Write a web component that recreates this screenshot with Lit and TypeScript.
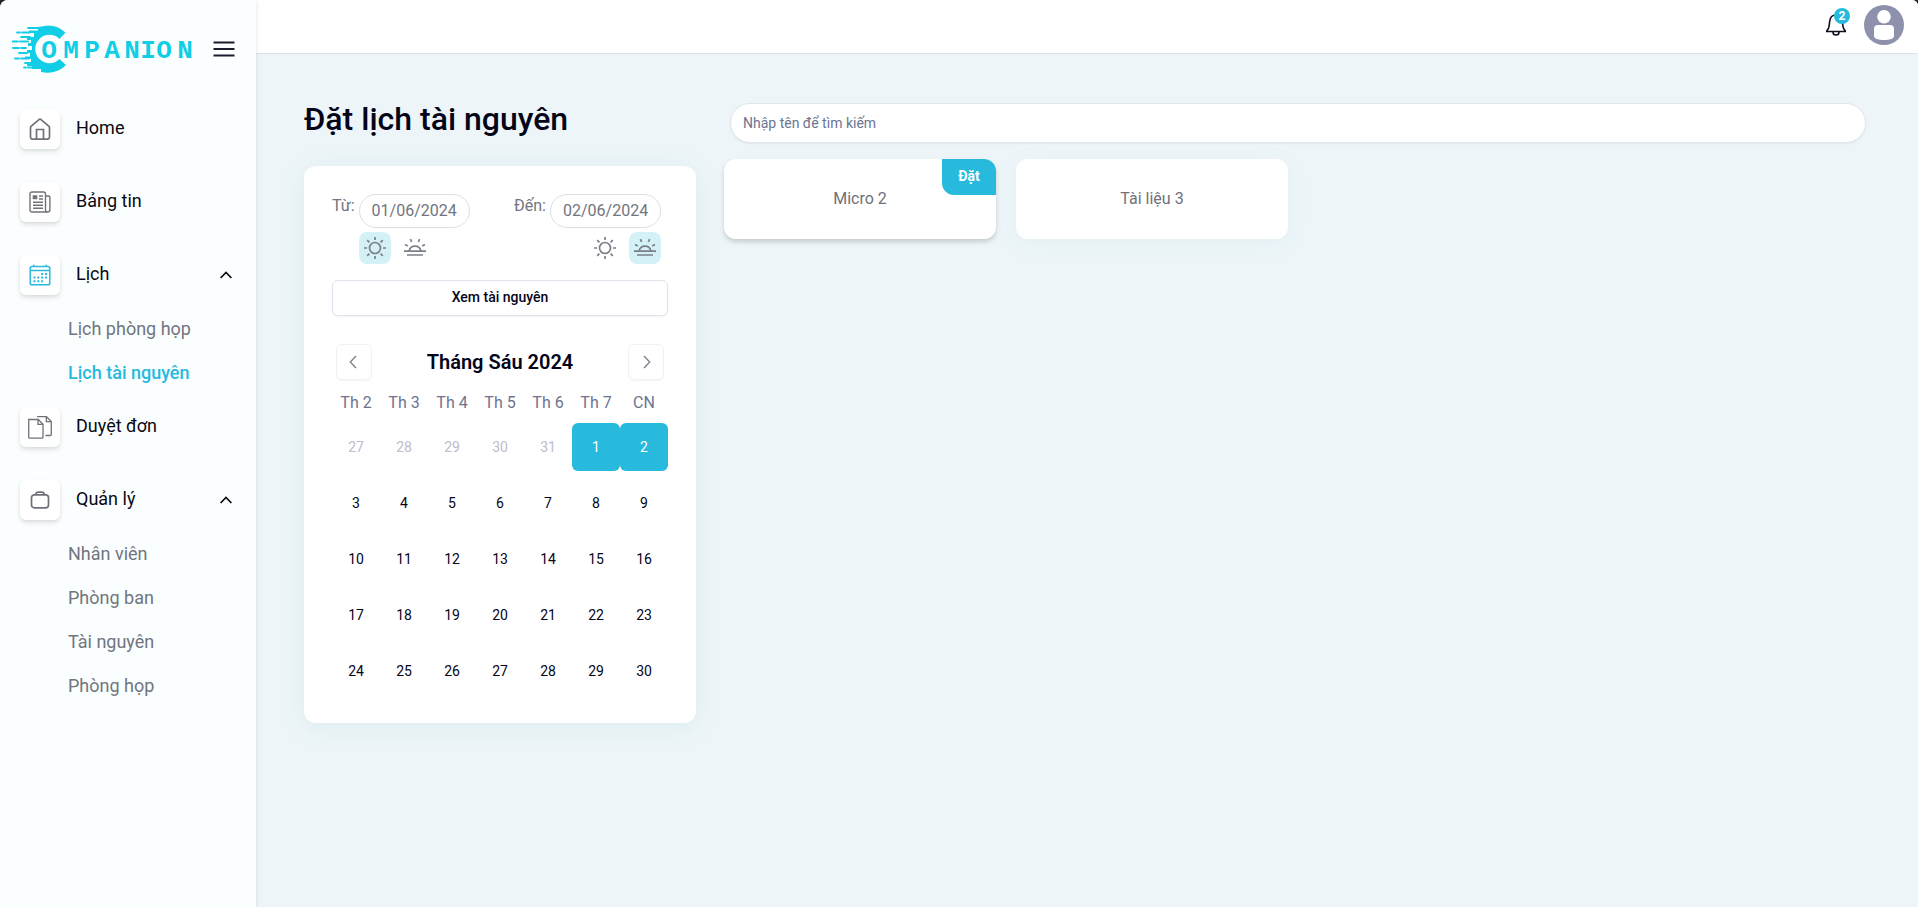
import { LitElement, html, css, svg } from "lit";
import { customElement, property, state } from "lit/decorators.js";
import { classMap } from "lit/directives/class-map.js";

const icons = {
  home: svg`<path d="M2 8.300 10.300 1.300c.4-.3 1-.3 1.400 0L20 8.300c.3.300.5.700.5 1.100V19a2.200 2.200 0 0 1-2.200 2.200H3.700A2.200 2.200 0 0 1 1.500 19V9.400c0-.4.2-.8.5-1.100Z"/><path d="M7.500 21v-9.500h7V21"/>`,
  news: svg`<path d="M18.500 21H3a2 2 0 0 1-2-2V3a2 2 0 0 1 2-2h11.500a2 2 0 0 1 2 2v15.800a2.200 2.200 0 0 0 4.400 0V6.500a1.500 1.500 0 0 0-1.500-1.500h-2.700" stroke-width="1.400"/><path d="M3.700 4.300h4.600v4H3.700z" fill="currentColor" stroke="none"/><path d="M10 5h4M10 8h4M4 11.200h10M4 14.200h10M4 17.200h10" stroke-width="1.400"/>`,
  calendar: svg`<path d="M3 2.500h16a1.800 1.800 0 0 1 1.800 1.800V19A1.800 1.800 0 0 1 19 20.800H3A1.800 1.800 0 0 1 1.200 19V4.300A1.800 1.800 0 0 1 3 2.500ZM1.200 6.500h19.600M4.800.8v1.700M17.200.8v1.700" stroke-width="1.500"/><path d="M12.200 10h2M16 10h2M4.500 13.500h2M8.300 13.500h2M12.200 13.500h2M16 13.500h2M4.500 17.200h2M8.300 17.200h2M12.200 17.200h2" stroke-width="2"/>`,
  docs: svg`<path d="M.7 3.500h9.600L15 8.200v13a1 1 0 0 1-1 1H1.700a1 1 0 0 1-1-1ZM10 3.500v4.900h5M9 .7h9.500l4.800 4.800v13a1 1 0 0 1-1 1H17.500M18.300.7v5h5" stroke-width="1.300"/>`,
  bag: svg`<rect x="2.500" y="5.800" width="17" height="13" rx="2.800"/><path d="M6.500 6c.4-1.800 1-2.800 2.600-2.800h3.800c1.600 0 2.200 1 2.600 2.800"/>`,
};

const sun = svg`<circle cx="11" cy="11" r="5.500"/><path d="M11 0v3M11 19v3M0 11h3M19 11h3M3.200 3.200l2.200 2.200M16.600 16.600l2.200 2.200M3.200 18.800l2.200-2.200M16.600 5.400l2.200-2.200"/>`;
const sunset = svg`<path d="M0 14.200h22M3 18h16M5.200 14a5.900 5.900 0 0 1 11.600 0M6.400 2.200l1.200 2.600M15.600 2.200l-1.200 2.600M1 7.600l2.800 1.400M21 7.600l-2.800 1.400"/>`;

type IconName = keyof typeof icons;
interface NavItem { label: string; icon: IconName; active?: boolean; children?: { label: string; active?: boolean }[]; }

const NAV: NavItem[] = [
  { label: "Home", icon: "home" },
  { label: "Bảng tin", icon: "news" },
  { label: "Lịch", icon: "calendar", active: true, children: [{ label: "Lịch phòng họp" }, { label: "Lịch tài nguyên", active: true }] },
  { label: "Duyệt đơn", icon: "docs" },
  { label: "Quản lý", icon: "bag", children: [{ label: "Nhân viên" }, { label: "Phòng ban" }, { label: "Tài nguyên" }, { label: "Phòng họp" }] },
];

const reset = css`
  :host { box-sizing: border-box; font-family: Roboto, "Noto Sans", sans-serif; }
  *, *::before, *::after { box-sizing: border-box; }
  button, input { font: inherit; color: inherit; margin: 0; }
  button { padding: 0; border: 0; background: none; cursor: pointer; }
  ul { list-style: none; margin: 0; padding: 0; }
  a { color: inherit; text-decoration: none; }
  svg { display: block; fill: none; }
`;

@customElement("brand-logo")
class BrandLogo extends LitElement {
  static styles = css`
    :host { display: block; }
    svg { display: block; }
    .word { font: 700 26px "Liberation Mono", monospace; text-anchor: middle; }
  `;
  render() {
    return html`<svg width="182" height="48" viewBox="0 0 182 48" fill="#12cde6" role="img" aria-label="Companion">
      <path d="M36 .5A26 26 0 0 1 53.500 7.500L47.500 14A14.200 14.200 0 1 0 47.500 34L54 40A26 26 0 0 1 29 47V44H20V41H15V38H19V34H13V31.500H18V28H15V25H20V21H16V18H19V15H15V12H22V8H17V5.500H26V2Z"/>
      <path d="M16 3h10M5 7.500h3M10 7.500h8M9 12h9M0 16.500h6M8 16.500h8M1 23h6M9 23h5M7 28h8M3 33.500h4M9 33.500h8M13 38h6M12 42.500h2M16 42.500h8" stroke="#12cde6" stroke-width="1.800" stroke-linecap="round"/>
      <text class="word" y="33" x="37 59 80 100 120 136 152 173">OMPANION</text>
    </svg>`;
  }
}

@customElement("side-nav")
class SideNav extends LitElement {
  static styles = [reset, css`
    :host { display: block; background: #fafeff; box-shadow: 0 1px 4px rgba(15, 60, 80, .14); padding: 25px 20px 24px 12px; position: relative; }
    .top { display: flex; align-items: center; justify-content: space-between; margin-bottom: 36px; }
    .menu { width: 24px; height: 24px; color: #1c1c2e; }
    .list { display: flex; flex-direction: column; gap: 12px; padding-left: 8px; }
    .entry { min-height: 61px; }
    .row { display: flex; align-items: center; width: 100%; height: 40px; text-align: left; font-size: 18px; line-height: 24px; color: #0a0a12; }
    .tile { display: grid; place-items: center; width: 40px; height: 40px; margin-right: 16px; border-radius: 6px; background: #fff; color: #71717a; box-shadow: 0 3px 5px rgba(0, 0, 0, .1), 0 1px 3px rgba(0, 0, 0, .05); }
    .tile.active { color: #27badc; }
    .label { flex: 1; padding-bottom: 2px; }
    .chevron { margin-right: 4px; }
    .sub { margin-top: 12px; padding-left: 48px; }
    .link { display: block; font-size: 18px; line-height: 44px; color: #71757e; }
    .link.active { color: #27badc; font-weight: 500; }
  `];
  render() {
    const content = (n: NavItem) => html`
      <span class=${classMap({ tile: true, active: !!n.active })}>
        <svg width=${n.icon === "docs" ? 24 : 22} height=${n.icon === "docs" ? 23 : 22} viewBox=${n.icon === "docs" ? "0 0 24 23" : "0 0 22 22"} stroke="currentColor" stroke-width="1.700" aria-hidden="true">${icons[n.icon]}</svg>
      </span><span class="label">${n.label}</span>`;
    return html`
      <div class="top">
        <brand-logo></brand-logo>
        <button class="menu" aria-label="Menu"><svg width="24" height="24" viewBox="0 0 24 24" stroke="currentColor" stroke-width="1.800"><path d="M1.500 5.500h21M1.500 12h21M1.500 18.500h21"/></svg></button>
      </div>
      <nav><ul class="list">
        ${NAV.map((n) => html`<li class="entry">
          ${n.children
            ? html`<button class="row" aria-expanded="true">${content(n)}
                <svg class="chevron" width="12" height="8" viewBox="0 0 12 8" stroke="currentColor" stroke-width="1.700" aria-hidden="true"><path d="M.6 7 6 1.500 11.400 7"/></svg></button>
              <ul class="sub">${n.children.map((c) => html`<li><a class=${classMap({ link: true, active: !!c.active })} href="#">${c.label}</a></li>`)}</ul>`
            : html`<a class="row" href="#">${content(n)}</a>`}
        </li>`)}
      </ul></nav>`;
  }
}

@customElement("top-bar")
class TopBar extends LitElement {
  static styles = [reset, css`
    :host { display: flex; align-items: center; justify-content: flex-end; gap: 16px; height: 53px; padding: 0 14px 4px; background: #fff; box-shadow: 0 1px 1px #dde4ea; }
    .bell { position: relative; width: 24px; height: 24px; color: #0e0e1c; }
    .count { position: absolute; top: -5px; right: -2px; width: 16px; height: 16px; border-radius: 50%; background: #27badc; color: #fff; font-size: 12px; font-weight: 700; line-height: 16px; text-align: center; }
  `];
  render() {
    return html`
      <button class="bell" aria-label="Thông báo">
        <svg width="24" height="24" viewBox="0 0 24 24" stroke="currentColor" stroke-width="1.600"><path d="M2.800 18.500h18.400v-.7c-1.300-1-2-2.500-2.300-4.600l-.6-5C17.900 4.600 15.500 2 12 2S6.100 4.600 5.700 8.200l-.6 5c-.3 2.100-1 3.600-2.300 4.600ZM9 18.800v.5c0 1.600 1.200 2.700 3 2.700s3-1.100 3-2.700v-.5"/></svg>
        <span class="count">2</span>
      </button>
      <button aria-label="Tài khoản">
        <svg width="40" height="40" viewBox="0 0 40 40"><circle cx="20" cy="20" r="20" fill="#8d91ac"/><circle cx="20" cy="11.700" r="6.800" fill="#fff"/><path d="M14 20h12a4 4 0 0 1 4 4v7c0 2.600-4.500 4-10 4s-10-1.400-10-4v-7a4 4 0 0 1 4-4Z" fill="#fff"/></svg>
      </button>`;
  }
}

@customElement("date-field")
class DateField extends LitElement {
  @property() label = "";
  @property() value = "";
  @property() period = "morning";
  @property({ type: Boolean, reflect: true }) end = false;
  static styles = [reset, css`
    :host { display: grid; grid-template-columns: auto 111px; column-gap: 4px; row-gap: 4px; color: #71757e; font-size: 16px; line-height: 24px; }
    .input { width: 100%; height: 34px; padding: 0 12px 2px; border: 1px solid #dbe1e8; border-radius: 17px; background: #fff; text-align: center; outline: none; }
    .periods { grid-column: 2; display: flex; gap: 8px; }
    :host([end]) .periods { justify-content: flex-end; }
    .period { display: grid; place-items: center; width: 32px; height: 32px; border-radius: 8px; color: #7b7f88; }
    .period.on { background: #d4f1f8; }
  `];
  render() {
    return html`
      <label for="date">${this.label}</label>
      <input id="date" class="input" type="text" .value=${this.value} />
      <div class="periods">
        ${[["morning", "Sáng", sun], ["evening", "Chiều", sunset]].map(([id, name, icon]) => html`
          <button class=${classMap({ period: true, on: this.period === id })} aria-label=${name as string} @click=${() => (this.period = id as string)}>
            <svg width="22" height="22" viewBox="0 0 22 22" stroke="currentColor" stroke-width="1.700">${icon}</svg>
          </button>`)}
      </div>`;
  }
}

@customElement("month-calendar")
class MonthCalendar extends LitElement {
  @state() selected = [1, 2];
  static styles = [reset, css`
    :host { display: block; }
    .head { display: flex; align-items: center; justify-content: space-between; padding: 0 4px; margin-bottom: 10px; }
    .title { margin: 0; font-size: 20px; line-height: 28px; font-weight: 600; color: #05051a; }
    .nav { display: grid; place-items: center; width: 36px; height: 36px; border: 1px solid #f1f0f7; border-radius: 6px; color: #808390; box-shadow: 0 1px 2px rgba(0, 0, 0, .04); }
    .days { width: 100%; table-layout: fixed; border-collapse: collapse; }
    th { padding: 0; height: 25px; font-size: 16px; line-height: 25px; font-weight: 400; color: #6b7490; text-align: center; }
    td { padding: 8px 0 0; }
    .day { display: block; width: 100%; height: 48px; border-radius: 6px; font-size: 14px; line-height: 20px; color: #05051a; text-align: center; }
    .day.out { color: #bcbccd; }
    .day.on { background: #27badc; color: #fff; }
  `];
  render() {
    const weeks = Array.from({ length: 5 }, (_, w) => Array.from({ length: 7 }, (_, d) => w * 7 + d - 4));
    return html`
      <div class="head">
        <button class="nav" aria-label="Tháng trước"><svg width="10" height="14" viewBox="0 0 10 14" stroke="currentColor" stroke-width="1.400"><path d="M7 1 1.300 7 7 13"/></svg></button>
        <h2 class="title">Tháng Sáu 2024</h2>
        <button class="nav" aria-label="Tháng sau"><svg width="10" height="14" viewBox="0 0 10 14" stroke="currentColor" stroke-width="1.400"><path d="m3 1 5.700 6L3 13"/></svg></button>
      </div>
      <table class="days">
        <thead><tr>${["Th 2", "Th 3", "Th 4", "Th 5", "Th 6", "Th 7", "CN"].map((d) => html`<th scope="col">${d}</th>`)}</tr></thead>
        <tbody>${weeks.map((week) => html`<tr>${week.map((n) => html`<td>
          <button class=${classMap({ day: true, out: n < 1, on: this.selected.includes(n) })}>${n < 1 ? n + 31 : n}</button></td>`)}</tr>`)}</tbody>
      </table>`;
  }
}

@customElement("resource-card")
class ResourceCard extends LitElement {
  @property() name = "";
  @property({ type: Boolean, reflect: true }) raised = false;
  static styles = [reset, css`
    :host { display: grid; place-items: center; position: relative; height: 80px; border-radius: 12px; background: #fff; color: #71717a; font-size: 16px; line-height: 24px; box-shadow: 0 4px 24px rgba(80, 150, 170, .06); }
    :host([raised]) { box-shadow: 0 3px 5px rgba(0, 0, 0, .16); }
    .book { position: absolute; top: 0; right: 0; width: 54px; height: 36px; padding-bottom: 2px; border-radius: 0 12px 0 12px; background: #27badc; color: #fff; font-size: 14px; font-weight: 700; line-height: 20px; }
  `];
  render() {
    return html`<span>${this.name}</span>${this.raised ? html`<button class="book">Đặt</button>` : ""}`;
  }
}

@customElement("app-root")
class AppRoot extends LitElement {
  static styles = [reset, css`
    :host { display: block; min-height: 100vh; background: #26242b; }
    .shell { display: grid; grid-template-columns: 256px minmax(0, 1fr); min-height: 100vh; border-radius: 8px 6px 0 0; overflow: hidden; background: #edf5f8; }
    .page { display: grid; grid-template-columns: 392px minmax(0, 1fr); column-gap: 28px; align-items: start; padding: 48px 46px 48px 48px; }
    .heading { margin: 0 0 28px; font-size: 32px; line-height: 37px; font-weight: 500; color: #05051a; }
    .panel { padding: 28px; border-radius: 12px; background: #fff; box-shadow: 0 4px 28px rgba(80, 150, 170, .09); }
    .dates { display: flex; justify-content: space-between; padding-right: 7px; margin-bottom: 16px; }
    .view { display: block; width: 100%; height: 36px; padding-bottom: 2px; margin-bottom: 28px; border: 1px solid #e2e2ef; border-radius: 6px; font-size: 14px; line-height: 20px; font-weight: 500; color: #05051a; box-shadow: 0 1px 2px rgba(0, 0, 0, .05); }
    .searchbar { padding: 2px 6px 0; margin-bottom: 16px; }
    .search { display: block; width: 100%; height: 40px; padding: 0 12px; border: 1px solid #e0e6ee; border-radius: 20px; background: #fff; font-size: 14px; line-height: 20px; outline: none; box-shadow: 0 1px 2px rgba(0, 0, 0, .05); }
    .search::placeholder { color: #6b7490; opacity: 1; }
    .cards { display: grid; grid-template-columns: repeat(4, minmax(0, 1fr)); gap: 20px; }
  `];
  render() {
    return html`<div class="shell">
      <side-nav></side-nav>
      <div>
        <top-bar></top-bar>
        <main class="page">
          <section>
            <h1 class="heading">Đặt lịch tài nguyên</h1>
            <div class="panel">
              <div class="dates">
                <date-field label="Từ:" value="01/06/2024" period="morning"></date-field>
                <date-field label="Đến:" value="02/06/2024" period="evening" end></date-field>
              </div>
              <button class="view">Xem tài nguyên</button>
              <month-calendar></month-calendar>
            </div>
          </section>
          <section>
            <div class="searchbar"><input class="search" type="search" aria-label="Tìm kiếm" placeholder="Nhập tên để tìm kiếm" /></div>
            <div class="cards">
              <resource-card name="Micro 2" raised></resource-card>
              <resource-card name="Tài liệu 3"></resource-card>
            </div>
          </section>
        </main>
      </div>
    </div>`;
  }
}
